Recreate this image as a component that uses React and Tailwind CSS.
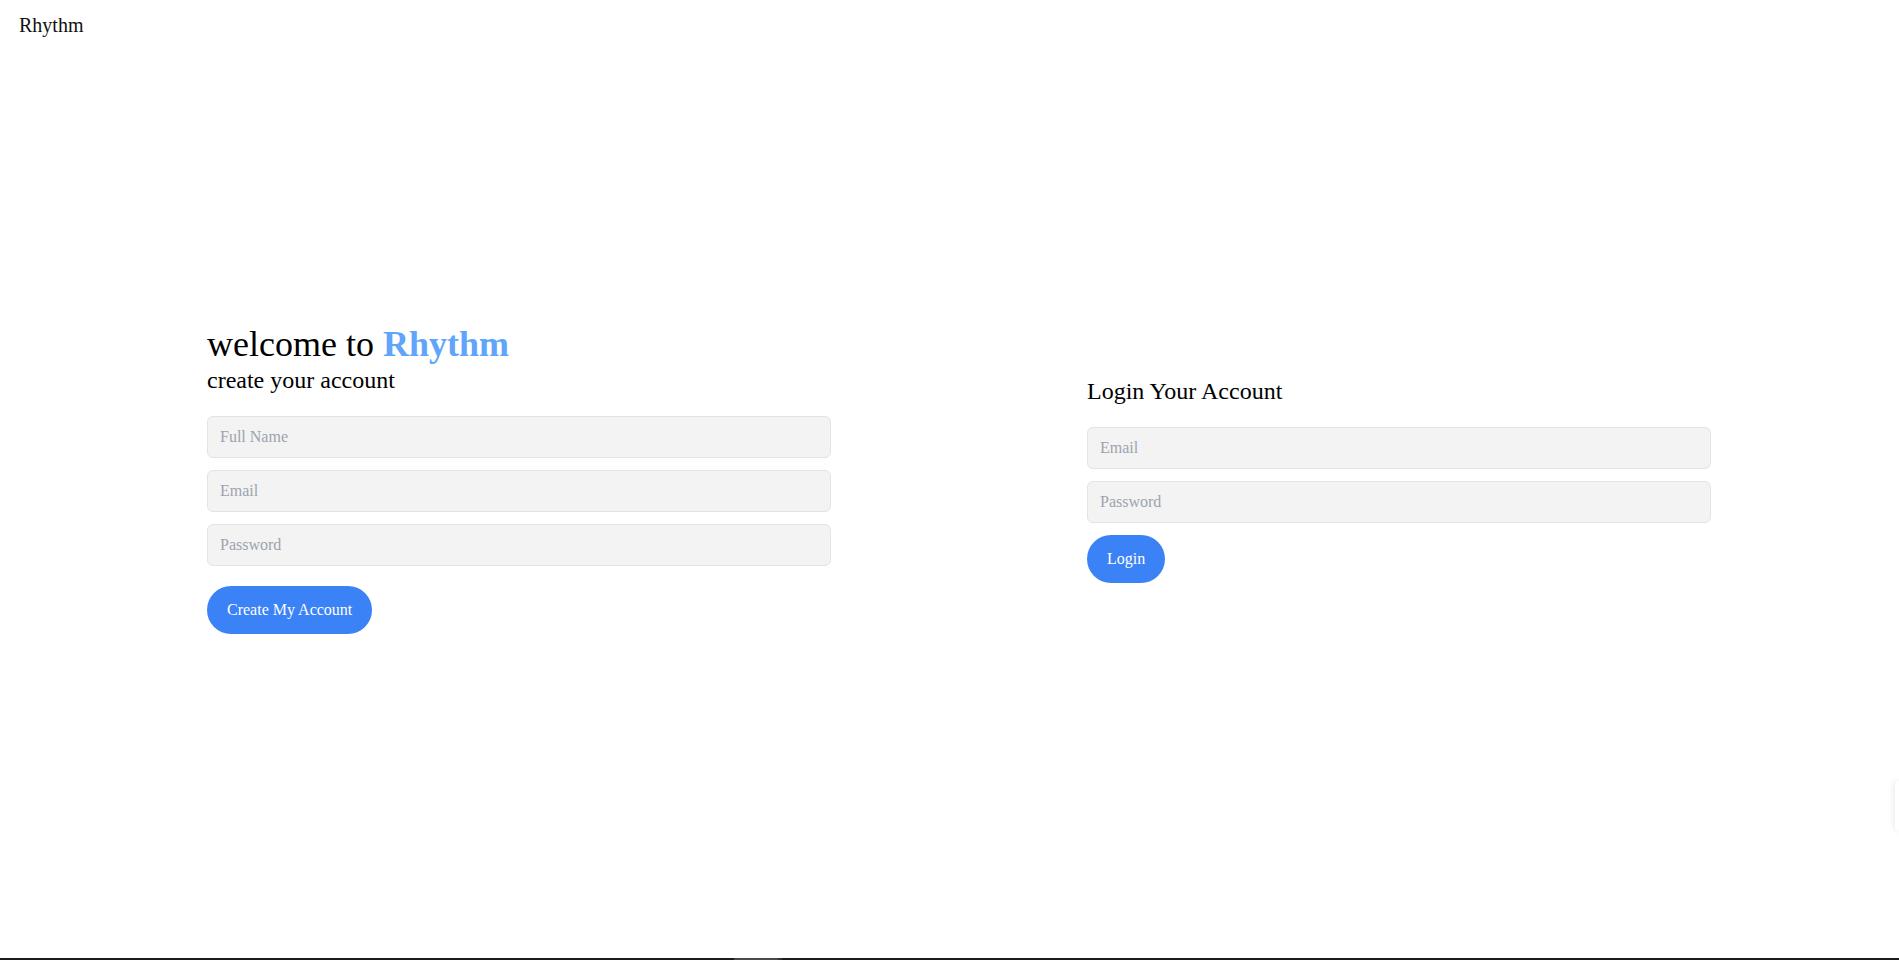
export default function App() {
  const inputCls =
    "block w-full mb-3 px-3 py-2 text-base leading-6 bg-[#f3f3f3] border border-[#e3e3e3] rounded-md placeholder:text-[#9ca3af] outline-none font-['Liberation_Serif',serif]";
  return (
    <div className="relative h-screen flex flex-col bg-white text-black font-['Liberation_Serif',serif] overflow-hidden">
      <div className="h-[52px] pl-[19px] pt-[11px] text-xl leading-7 text-[#111]">Rhythm</div>
      <div className="flex-1 flex items-center pl-[207px] pb-[56px] gap-64">
        <div className="w-[624px] pt-1">
          <h1 className="text-4xl leading-10">
            welcome to <span className="font-bold text-[#60a5fa]">Rhythm</span>
          </h1>
          <p className="text-2xl leading-8 mb-5">create your account</p>
          <input className={inputCls} placeholder="Full Name" />
          <input className={inputCls} placeholder="Email" />
          <input className={inputCls} type="password" placeholder="Password" />
          <button className="mt-2 px-5 py-3 rounded-full bg-[#3b82f6] text-white text-base leading-6 font-['Liberation_Serif',serif]">
            Create My Account
          </button>
        </div>
        <div className="w-[624px] pt-1">
          <h2 className="text-2xl leading-8 mb-5">Login Your Account</h2>
          <input className={inputCls} placeholder="Email" />
          <input className={inputCls} type="password" placeholder="Password" />
          <button className="px-5 py-3 rounded-full bg-[#3b82f6] text-white text-base leading-6 font-['Liberation_Serif',serif]">
            Login
          </button>
        </div>
      </div>
      <div className="h-[2px] flex bg-[#1c1c1c]">
        <div className="ml-[734px] w-[44px] bg-[#4a4a4a]" />
        <div className="w-[4px] bg-[#333]" />
      </div>
      <div className="absolute right-0 top-[781px] w-[4px] h-[49px] bg-white rounded-l-sm shadow-[0_0_6px_rgba(0,0,0,0.15)]" />
    </div>
  );
}
